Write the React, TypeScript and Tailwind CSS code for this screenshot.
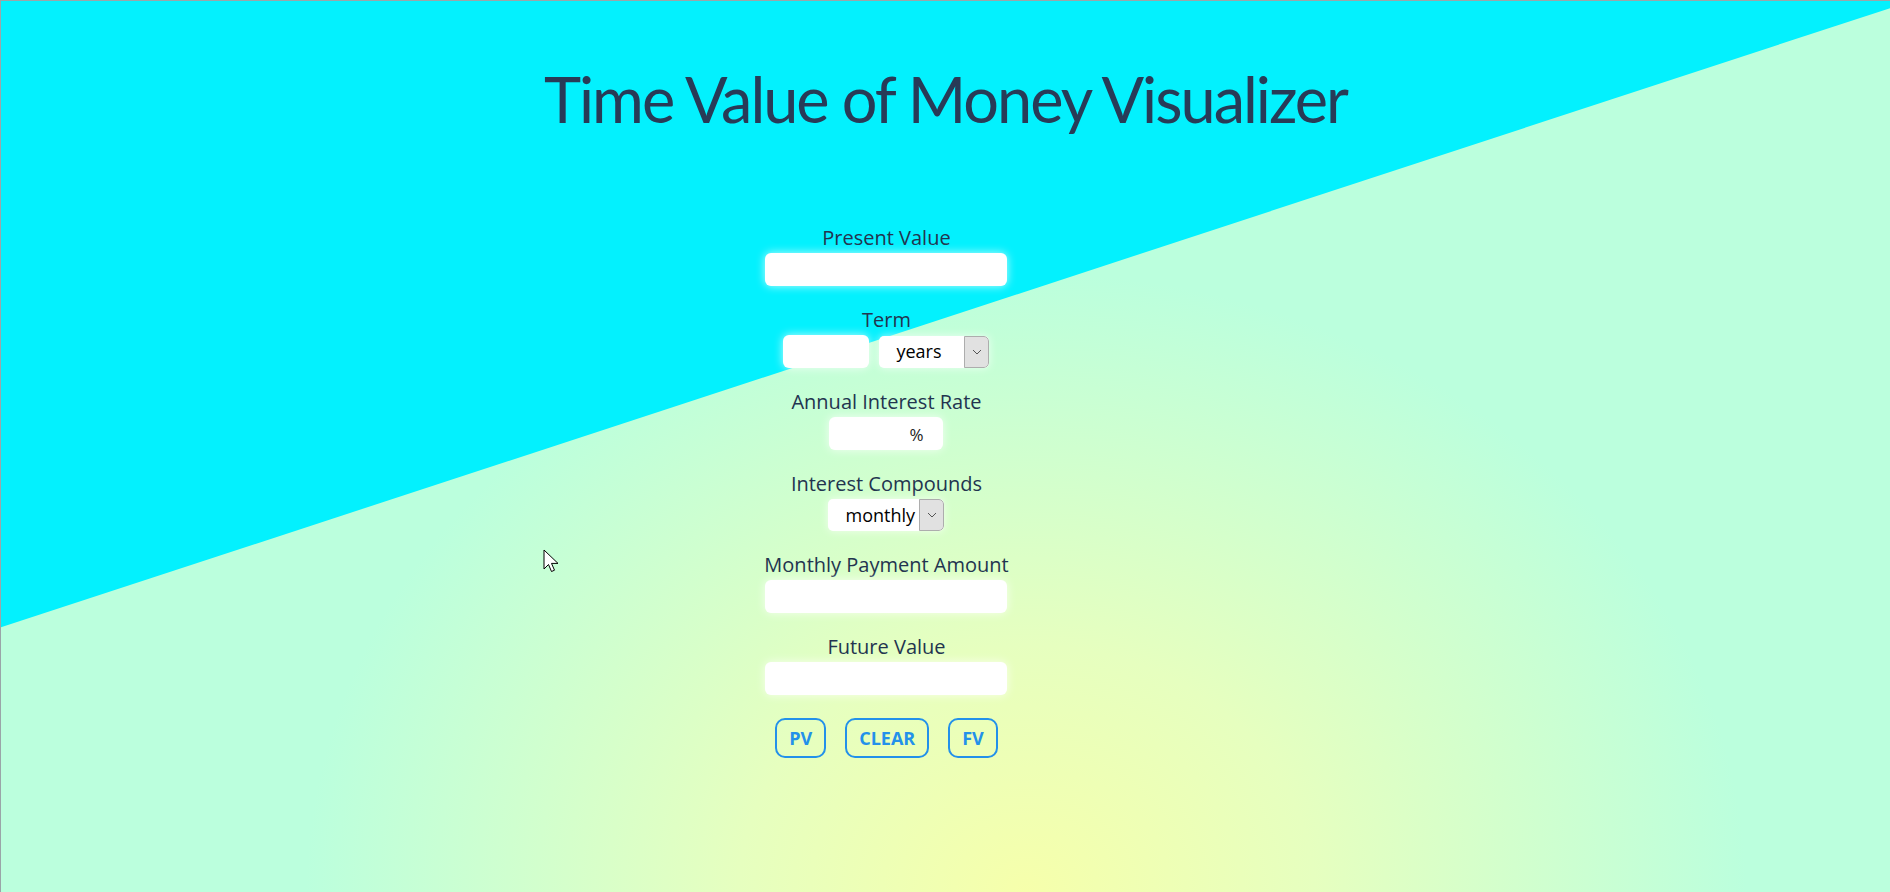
import { useState } from 'react'

const font = { fontFamily: '"Open Sans", "Noto Sans", sans-serif' }

function Field({ label, children }: { label: string; children: React.ReactNode }) {
  return (
    <div className="flex flex-col items-center mb-[22px]">
      <label className="text-[20px] leading-[24px] text-[#22344f]">{label}</label>
      <div className="mt-[3px] flex items-center gap-[10px]">{children}</div>
    </div>
  )
}

function FakeSelect({ value, width }: { value: string; width: string }) {
  return (
    <div className={`${width} h-[32px] flex items-stretch bg-white rounded-[5px] shadow-[0_0_8px_rgba(255,255,255,0.7)] overflow-hidden`}>
      <span className="flex-1 flex items-center pl-[17px] text-[18px] text-black">{value}</span>
      <span className="w-[25px] flex items-center justify-center bg-[#e1e1e1] border border-[#adadad] rounded-r-[5px]">
        <svg width="10" height="6" viewBox="0 0 10 6" fill="none" stroke="#555" strokeWidth="1">
          <path d="M1 1l4 4 4-4" />
        </svg>
      </span>
    </div>
  )
}

export default function App() {
  const [pv, setPv] = useState('')
  const [term, setTerm] = useState('')
  const [rate, setRate] = useState('')
  const [pmt, setPmt] = useState('')
  const [fv, setFv] = useState('')

  const inputCls =
    'h-[33px] bg-white rounded-[6px] outline-none px-2 text-[18px] shadow-[0_0_10px_rgba(255,255,255,0.75)]'

  return (
    <div
      className="relative w-full h-[892px] overflow-hidden border-t border-l border-[#9aa5a8] bg-[radial-gradient(ellipse_720px_620px_at_1025px_892px,#f6ffab_0%,#e6ffbf_40%,#bbffdd_100%)]"
      style={font}
    >
      {/* cyan band */}
      <div className="absolute inset-0 bg-[#03f1fe] [clip-path:polygon(0_0,100%_0,100%_0.8%,0_70.3%)]" />

      <div className="relative flex flex-col items-center">
        <h1 className="mt-[58px] text-[63px] leading-[80px] text-[#283b57] tracking-[-2px]" style={{ fontFamily: 'Lato, sans-serif' }}>
          Time Value of Money Visualizer
        </h1>

        <div className="mt-[87px] mr-[118px] flex flex-col items-center">
          <Field label="Present Value">
            <input value={pv} onChange={(e) => setPv(e.target.value)} className={`${inputCls} w-[242px]`} />
          </Field>

          <Field label="Term">
            <input value={term} onChange={(e) => setTerm(e.target.value)} className={`${inputCls} w-[86px] h-[32px]`} />
            <FakeSelect value="years" width="w-[110px]" />
          </Field>

          <Field label="Annual Interest Rate">
            <div className="relative">
              <input value={rate} onChange={(e) => setRate(e.target.value)} className={`${inputCls} w-[114px] pr-[28px]`} />
              <span className="absolute right-[20px] top-[5px] text-[17px] text-[#222]">%</span>
            </div>
          </Field>

          <Field label="Interest Compounds">
            <FakeSelect value="monthly" width="w-[116px]" />
          </Field>

          <Field label="Monthly Payment Amount">
            <input value={pmt} onChange={(e) => setPmt(e.target.value)} className={`${inputCls} w-[242px]`} />
          </Field>

          <Field label="Future Value">
            <input value={fv} onChange={(e) => setFv(e.target.value)} className={`${inputCls} w-[242px]`} />
          </Field>

          <div className="mt-[1px] flex gap-[19px]">
            {['PV', 'CLEAR', 'FV'].map((b) => (
              <button
                key={b}
                onClick={() => b === 'CLEAR' && (setPv(''), setTerm(''), setRate(''), setPmt(''), setFv(''))}
                className="h-[40px] px-[12px] border-2 border-[#2391ea] rounded-[10px] text-[#2391ea] text-[18px] font-bold"
              >
                {b}
              </button>
            ))}
          </div>
        </div>
      </div>

      {/* mouse pointer */}
      <svg className="absolute left-[542px] top-[548px]" width="16" height="25" viewBox="0 0 16 25">
        <path d="M1 1v19l4.5-4.5 3 7 3-1.3-3-6.8H15z" fill="#fff" stroke="#000" strokeWidth="1" />
      </svg>
    </div>
  )
}
